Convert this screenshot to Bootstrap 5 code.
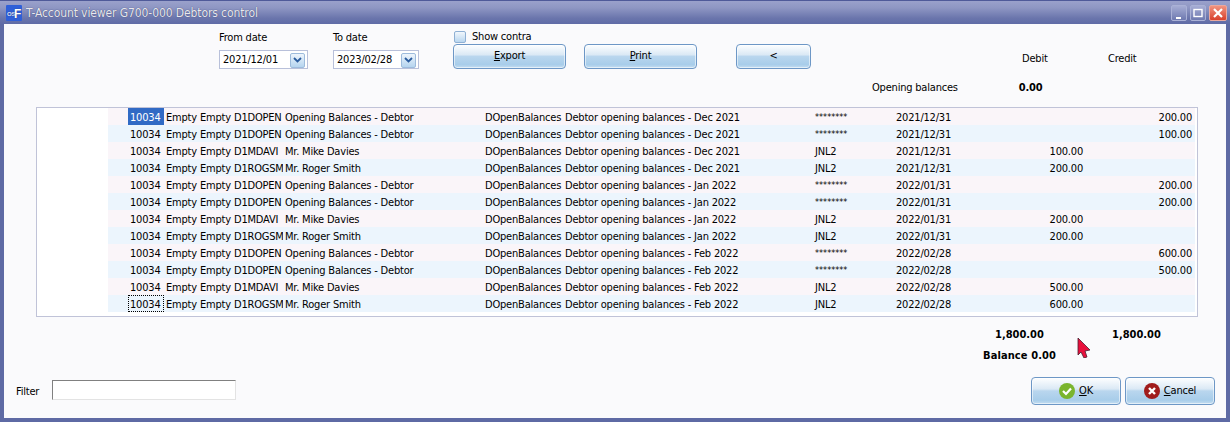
<!DOCTYPE html>
<html lang="en">
<head>
  <meta charset="UTF-8">
  <meta name="viewport" content="width=device-width, initial-scale=1.0">
  <title>T-Account viewer</title>
  <link rel="stylesheet" href="https://cdn.jsdelivr.net/npm/bootstrap@5.3.0/dist/css/bootstrap.min.css">
  <style>
    html, body {
      height: 100%;
      overflow: hidden;
      background: #fafafc;
    }
    body {
      font-family: "DejaVu Sans Condensed", "DejaVu Sans", "Liberation Sans", sans-serif;
      font-size: 11px;
      line-height: 14px;
      letter-spacing: -.2px;
      color: #000;
    }
    .win-frame {
      width: 1230px;
      height: 422px;
      position: relative;
      border: solid #5e6aa4;
      border-width: 0 4px 4px 4px;
      box-shadow: inset 0 0 0 1px #8d95c0;
    }
    .win-title {
      height: 24px;
      margin: 0 -4px;
      padding: 0 3px 0 6px;
      background: linear-gradient(#9aa1cb 0, #8e96c3 30%, #6a75ac 75%, #5f6ba6 100%);
      border-top: 1px solid #4f5a99;
      color: #e8e8ee;
      font-size: 12px;
      letter-spacing: -.1px;
      text-shadow: 0 0 1px #2a3264;
    }
    .win-ctl {
      width: 16px;
      height: 16px;
      border: 1px solid #aab1d6;
      border-radius: 2px;
      background: linear-gradient(#a6add4, #6e79b0);
      margin-left: 3px;
    }
    .win-ctl.is-close {
      width: 18px;
      border-color: #eba79c;
      background: linear-gradient(#f0937f, #d9402c);
    }
    .client-area {
      height: 394px;
      background: #fafafc;
    }
    .top-bar {
      height: 83px;
      padding-left: 215px;
    }
    .date-col { width: 114px; padding-top: 7px; }
    .date-col.is-to { width: 120px; }
    .date-box {
      width: 89px;
      height: 19px;
      margin-top: 5px;
      padding: 1px 2px 0 3px;
      border: 1px solid #b8c0da;
      background: #fff;
    }
    .date-col.is-to .date-box { width: 86px; }
    .drop-btn {
      width: 15px;
      height: 15px;
      border: 1px solid #9dbbdc;
      border-radius: 2px;
      background: linear-gradient(#eef5fc, #b5d4ef);
    }
    .btn-col { padding-top: 6px; }
    .check-line { height: 13px; padding-left: 1px; margin-bottom: 1px; }
    .check-box {
      width: 12px;
      height: 12px;
      margin-right: 6px;
      border: 1px solid #8fb0d4;
      border-radius: 2px;
      background: linear-gradient(#f2f7fc, #b9d6ef);
    }
    .aero-btn {
      height: 25px;
      padding: 0;
      font-size: 11px;
      letter-spacing: -.2px;
      color: #000;
      border: 1px solid #6d97c6;
      border-radius: 4px;
      background: linear-gradient(#fdfeff 0, #dbe9f5 42%, #b9d6ee 50%, #a8cdea 85%, #c4ddf1 100%);
      box-shadow: inset 0 0 0 1px rgba(255, 255, 255, .55);
    }
    .aero-btn:hover { color: #000; border-color: #6d97c6; }
    .aero-wide { width: 113px; }
    .aero-back { width: 75px; }
    .aero-dlg { width: 90px; height: 28px; }
    .gap-print { margin-left: 18px; }
    .gap-back { margin-left: 39px; }
    .sum-col { margin-left: 61px; width: 266px; }
    .sum-head { height: 24px; padding-top: 28px; box-sizing: content-box; }
    .sum-debit { margin-left: 150px; width: 86px; }
    .sum-open { padding-top: 5px; }
    .sum-open b { margin-left: 61px; }
    .ledger-box {
      margin-left: 32px;
      width: 1162px;
      height: 210px;
      background: #fff;
      border: 1px solid #c0c3d8;
      padding-left: 71px;
    }
    .ledger-tbl {
      table-layout: fixed;
      border-collapse: collapse;
      width: 1087px;
    }
    .ledger-tbl td {
      height: 17px;
      padding: 1px 2px 0;
      white-space: nowrap;
      overflow: hidden;
      line-height: 15px;
    }
    .ledger-tbl tr:nth-child(odd) td { background: #faf5f9; }
    .ledger-tbl tr:nth-child(even) td { background: #ecf5fd; }
    .ledger-tbl td.pick-on { background: #316ac5 !important; color: #fff; }
    .ledger-tbl td.pick-focus { outline: 1px dotted #000; outline-offset: -1px; }
    .ledger-tbl td.amt { text-align: right; padding-right: 3px; }
    .ledger-tbl td.stars { font-size: 9px; letter-spacing: 0; padding-top: 0; line-height: 14px; }
    .tot-row { height: 20px; margin-top: 11px; font-weight: 700; letter-spacing: 0; }
    .tot-debit { margin-left: 991px; width: 117px; }
    .bal-row { height: 20px; margin-top: 1px; padding-left: 979px; font-weight: 700; letter-spacing: .1px; }
    .foot-row { padding: 0 11px 0 12px; margin-top: 8px; }
    .filter-lbl { width: 36px; padding-top: 2px; }
    .filter-box {
      width: 184px;
      height: 20px;
      margin-bottom: 2px;
      border: 1px solid;
      border-color: #808080 #e3e3e3 #e3e3e3 #808080;
      background: #fff;
      padding: 0 2px;
      font-size: 11px;
    }
    .filter-box:focus { outline: none; }
    .red-cursor { position: absolute; left: 1073px; top: 338px; }
  </style>
</head>
<body>
  <div class="win-frame">
    <div class="win-title d-flex align-items-center">
      <svg width="16" height="16" viewBox="0 0 16 16" class="me-1 flex-shrink-0">
        <rect width="16" height="16" rx="1" fill="#2f5fd8"/>
        <text x="1" y="11" font-family="Liberation Sans" font-size="6" font-weight="700" fill="#dfe6ff">OS</text>
        <text x="8" y="13" font-family="Liberation Sans" font-size="12" font-weight="700" fill="#fff">F</text>
      </svg>
      <span class="flex-grow-1">T-Account viewer G700-000 Debtors control</span>
      <div class="win-ctl d-flex align-items-end justify-content-center">
        <svg width="8" height="8" viewBox="0 0 8 8"><rect x="1" y="5" width="5" height="2" fill="#fff"/></svg>
      </div>
      <div class="win-ctl d-flex align-items-center justify-content-center">
        <svg width="10" height="10" viewBox="0 0 10 10"><rect x="1" y="1.5" width="8" height="7" fill="none" stroke="#fff" stroke-width="1.4"/></svg>
      </div>
      <div class="win-ctl is-close d-flex align-items-center justify-content-center">
        <svg width="10" height="10" viewBox="0 0 10 10"><path d="M1 1l8 8M9 1l-8 8" stroke="#fff" stroke-width="2.2"/></svg>
      </div>
    </div>

    <div class="client-area">
      <div class="top-bar d-flex">
        <div class="date-col">
          <div>From date</div>
          <div class="date-box d-flex align-items-center justify-content-between">
            <span>2021/12/01</span>
            <span class="drop-btn d-flex align-items-center justify-content-center">
              <svg width="9" height="7" viewBox="0 0 9 7"><path d="M1 1l3.500 3.500L8 1" fill="none" stroke="#2b5c9e" stroke-width="1.800"/></svg>
            </span>
          </div>
        </div>
        <div class="date-col is-to">
          <div>To date</div>
          <div class="date-box d-flex align-items-center justify-content-between">
            <span>2023/02/28</span>
            <span class="drop-btn d-flex align-items-center justify-content-center">
              <svg width="9" height="7" viewBox="0 0 9 7"><path d="M1 1l3.500 3.500L8 1" fill="none" stroke="#2b5c9e" stroke-width="1.800"/></svg>
            </span>
          </div>
        </div>
        <div class="btn-col">
          <div class="check-line d-flex align-items-center"><span class="check-box"></span>Show contra</div>
          <button class="btn aero-btn aero-wide"><u>E</u>xport</button>
        </div>
        <div class="btn-col gap-print">
          <div class="check-line"></div>
          <button class="btn aero-btn aero-wide"><u>P</u>rint</button>
        </div>
        <div class="btn-col gap-back">
          <div class="check-line"></div>
          <button class="btn aero-btn aero-back">&lt;</button>
        </div>
        <div class="sum-col">
          <div class="sum-head d-flex">
            <span class="sum-debit">Debit</span>
            <span>Credit</span>
          </div>
          <div class="sum-open">Opening balances<b>0.00</b></div>
        </div>
      </div>

      <div class="ledger-box">
        <table class="ledger-tbl">
          <colgroup>
            <col style="width:20px"><col style="width:36px"><col style="width:34px"><col style="width:34px">
            <col style="width:51px"><col style="width:200px"><col style="width:80px"><col style="width:250px">
            <col style="width:81px"><col style="width:105px"><col style="width:87px"><col style="width:109px">
          </colgroup>
          <tbody id="ledger-rows"></tbody>
        </table>
      </div>

      <div class="tot-row d-flex">
        <span class="tot-debit">1,800.00</span>
        <span>1,800.00</span>
      </div>
      <div class="bal-row">Balance 0.00</div>
      <div class="foot-row d-flex align-items-center">
        <span class="filter-lbl">Filter</span>
        <input type="text" class="filter-box">
        <button class="btn aero-btn aero-dlg ms-auto d-flex align-items-center justify-content-center">
          <svg width="16" height="16" viewBox="0 0 16 16" class="me-1"><circle cx="8" cy="8" r="8" fill="#7ab52e"/><path d="M4 8l3 3 5-5.500" fill="none" stroke="#fff" stroke-width="2.200"/></svg>
          <span><u>O</u>K</span>
        </button>
        <button class="btn aero-btn aero-dlg ms-1 d-flex align-items-center justify-content-center">
          <svg width="16" height="16" viewBox="0 0 16 16" class="me-1"><circle cx="8" cy="8" r="8" fill="#a01c1c"/><path d="M5 5l6 6M11 5l-6 6" stroke="#fff" stroke-width="2.400"/></svg>
          <span><u>C</u>ancel</span>
        </button>
      </div>
    </div>

    <svg class="red-cursor" width="14" height="20" viewBox="0 0 14 20">
      <path d="M1 0l12 12-5 1 2 6-3 1-3-6-3 3z" fill="#e8103c" stroke="#4a2030" stroke-width=".8"/>
    </svg>
  </div>

  <script src="https://cdn.jsdelivr.net/npm/bootstrap@5.3.0/dist/js/bootstrap.bundle.min.js"></script>
  <script>
    const rows = [
      ['D1DOPEN', 'Opening Balances - Debtor', 'Dec 2021', '********', '2021/12/31', '', '200.00'],
      ['D1DOPEN', 'Opening Balances - Debtor', 'Dec 2021', '********', '2021/12/31', '', '100.00'],
      ['D1MDAVI', 'Mr. Mike Davies', 'Dec 2021', 'JNL2', '2021/12/31', '100.00', ''],
      ['D1ROGSM', 'Mr. Roger Smith', 'Dec 2021', 'JNL2', '2021/12/31', '200.00', ''],
      ['D1DOPEN', 'Opening Balances - Debtor', 'Jan 2022', '********', '2022/01/31', '', '200.00'],
      ['D1DOPEN', 'Opening Balances - Debtor', 'Jan 2022', '********', '2022/01/31', '', '200.00'],
      ['D1MDAVI', 'Mr. Mike Davies', 'Jan 2022', 'JNL2', '2022/01/31', '200.00', ''],
      ['D1ROGSM', 'Mr. Roger Smith', 'Jan 2022', 'JNL2', '2022/01/31', '200.00', ''],
      ['D1DOPEN', 'Opening Balances - Debtor', 'Feb 2022', '********', '2022/02/28', '', '600.00'],
      ['D1DOPEN', 'Opening Balances - Debtor', 'Feb 2022', '********', '2022/02/28', '', '500.00'],
      ['D1MDAVI', 'Mr. Mike Davies', 'Feb 2022', 'JNL2', '2022/02/28', '500.00', ''],
      ['D1ROGSM', 'Mr. Roger Smith', 'Feb 2022', 'JNL2', '2022/02/28', '600.00', '']
    ];
    const body = document.getElementById('ledger-rows');
    rows.forEach((r, i) => {
      const tr = document.createElement('tr');
      const idClass = i === 0 ? 'pick-on' : (i === rows.length - 1 ? 'pick-focus' : '');
      const refClass = r[3] === 'JNL2' ? '' : 'stars';
      tr.innerHTML = `
        <td></td><td class="${idClass}">10034</td><td>Empty</td><td>Empty</td>
        <td>${r[0]}</td><td>${r[1]}</td><td>DOpenBalances</td>
        <td>Debtor opening balances - ${r[2]}</td>
        <td class="${refClass}">${r[3]}</td><td>${r[4]}</td>
        <td class="amt">${r[5]}</td><td class="amt">${r[6]}</td>`;
      body.appendChild(tr);
    });
  </script>
</body>
</html>
